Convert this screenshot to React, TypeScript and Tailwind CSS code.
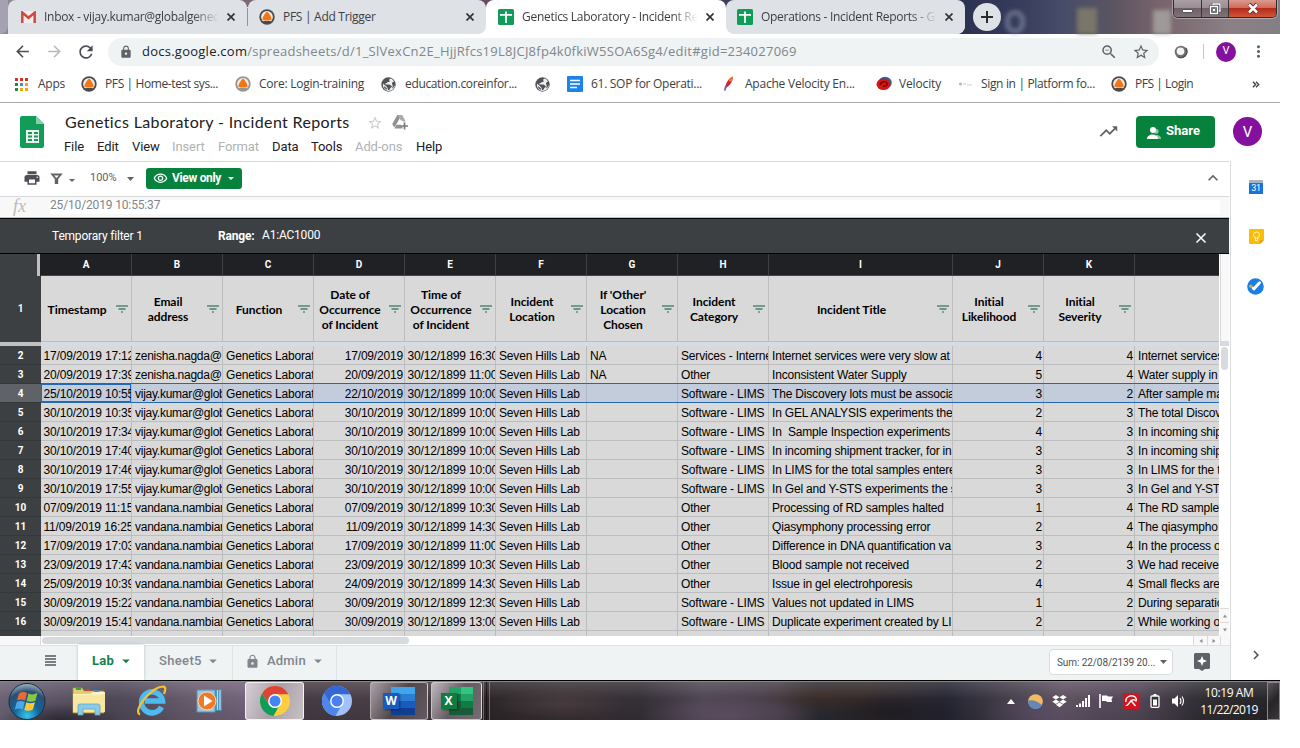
import type { ReactNode } from "react";
import { MdArrowBack, MdArrowForward, MdRefresh, MdLock, MdStarBorder, MdMoreVert, MdPrint, MdTrendingUp, MdKeyboardArrowUp, MdArrowDropDown, MdOutlineVisibility, MdOutlineZoomOut, MdKeyboardArrowRight } from "react-icons/md";
import { FaDropbox } from "react-icons/fa";

const COLS = "grid grid-cols-[91px_91px_91px_91px_91px_91px_91px_91px_184px_91px_91px_84px]";

function Pfs({ ring = "#4b4b4d" }: { ring?: string }) {
  return (
    <svg className="h-4 w-4 shrink-0" viewBox="0 0 16 16">
      <circle cx="8" cy="8" r="7.7" fill={ring} />
      <circle cx="8" cy="8" r="5.9" fill="#f6ece4" />
      <path d="M8 2.8c1.2 0 5 6 4.5 7.6-.6 1.5-8.4 1.500-9 0C3 8.800 6.800 2.800 8 2.800z" fill="#f37516" />
      <path d="M3.500 12h9L10.500 14h-5z" fill={ring} />
    </svg>
  );
}

function SheetsFav() {
  return (
    <svg className="h-4 w-4 shrink-0" viewBox="0 0 16 16">
      <rect width="16" height="16" rx="1.500" fill="#0f9d58" />
      <path d="M2 5.800h12M8 2.500v11.500" stroke="#fff" strokeWidth="1.800" fill="none" />
    </svg>
  );
}

function Globe() {
  return (
    <svg className="h-[15px] w-[15px] shrink-0" viewBox="0 0 15 15">
      <circle cx="7.500" cy="7.500" r="7.200" fill="#4f5256" />
      <path d="M9.800 1.500C8 2 7.800 3.200 8.500 3.800c.8.500-.2 1.400-1.300 1.300-1 0-1 1.200-2 1.200C4 6.300 3.600 7.300 5 7.500h3c1.300 0 1.200 1.200 2.400 1.300.8 0 .6 1.200-.4 1.700-1 .4-.8 1.700-1.800 2.600-1.400.3-1.400-.8-1.500-1.800C6.600 10 4.900 9.300 2 6.500c-.6 3 .8 6 4 7.200 4 1 7.500-1.500 7.800-5.200-1 .5-2-.5-2.500-1.500-.6-1 .3-2.300 1.700-2.300C12.500 3.200 11.300 2 9.800 1.500z" fill="#fff" opacity=".9" />
      <path d="M3 9c1.500 1.500 3 1.500 3.300 3.800C4 12.500 3 11 3 9zM11 6.500c.5-1 1.800-1 2.300 0s-.3 4-1.800 5c-.5-1.500 1-2.500-.5-5z" fill="#4f5256" />
    </svg>
  );
}

function Gmail() {
  return (
    <svg className="h-[12px] w-[15px] shrink-0" viewBox="0 0 15 12">
      <rect width="15" height="12" rx="1" fill="#f3eeee" />
      <path d="M1.300 12V1.600L7.500 6.800l6.200-5.200V12" fill="none" stroke="#d6453a" strokeWidth="2.500" />
    </svg>
  );
}

function Tab({ icon, title, width, active, fade, pad = "pl-3" }: { icon: ReactNode; title: string; width: string; active?: boolean; fade?: boolean; pad?: string }) {
  return (
    <div className={`flex h-full shrink-0 items-center gap-2 ${width} ${pad} pr-[12px] ${active ? "rounded-t-lg bg-white" : "bg-[#dee1e6]"}`}>
      {icon}
      <div className={`min-w-0 flex-1 overflow-hidden whitespace-nowrap text-[12px] tracking-[-0.29px] text-[#3c4043] ${fade ? "[mask-image:linear-gradient(to_right,#000_85%,transparent_100%)]" : ""}`}>{title}</div>
      <svg className="h-2 w-2 shrink-0" viewBox="0 0 8 8"><path d="M.5.500l7 7M7.500.500l-7 7" stroke="#303338" strokeWidth="1.700" /></svg>
    </div>
  );
}

function TabStrip() {
  return (
    <div className="flex h-[34px] w-[1280px] bg-[linear-gradient(90deg,#8d8795_0,#7d6872_19%,#51435a_30%,#694e5f_40%,#3a3d5c_57%,#2b3250_75%,#35395a_79%,#474c69_83%,#5c5561_87%,#7b656d_91%,#8a8085_96%,#837f86_100%)]">
      <div className="flex h-full w-[965px] shrink-0 overflow-hidden rounded-br-lg">
        <div className="w-2 shrink-0 rounded-br-lg bg-[#a5a1b0]" />
        <div className="flex h-full w-[478px] shrink-0 items-center bg-[linear-gradient(transparent_40%,#fff_40%)]">
          <Tab width="w-[239px]" icon={<Gmail />} title="Inbox - vijay.kumar@globalgenec" fade pad="pl-[13px] rounded-t-lg" />
          <div className="flex h-full w-px shrink-0 items-center bg-[linear-gradient(transparent_20%,#dee1e6_20%)]"><div className="h-[18px] w-px bg-[#909399]" /></div>
          <Tab width="w-[238px]" icon={<Pfs />} title="PFS | Add Trigger" pad="pl-[11px] rounded-t-lg rounded-br-lg" />
        </div>
        <Tab width="w-[240px]" active icon={<SheetsFav />} title="Genetics Laboratory - Incident Re" fade />
        <div className="h-full bg-[linear-gradient(transparent_40%,#fff_40%)]">
          <Tab width="w-[239px]" icon={<SheetsFav />} title="Operations - Incident Reports - G" fade pad="pl-[11px] rounded-t-lg rounded-b-lg" />
        </div>
      </div>
      <div className="ml-2 mt-[3px] flex h-7 w-7 shrink-0 items-center justify-center rounded-full bg-[#dee1e6]">
        <svg className="h-3 w-3" viewBox="0 0 12 12"><path d="M6 0v12M0 6h12" stroke="#2a2c30" strokeWidth="2" /></svg>
      </div>
      <div className="flex h-full min-w-0 flex-1 items-end gap-[52px] pl-1 blur-[2px]">
        <div className="h-[24px] w-[20px] rounded-full border-[5px] border-[#8895a8] opacity-60" />
        <div className="h-[26px] w-[20px] bg-[#85806a] opacity-80" />
        <div className="ml-1 h-[24px] w-[18px] bg-[#a8a8a4] opacity-80" />
      </div>
      <div className="mr-[3px] flex h-[18px] w-[104px] shrink-0 overflow-hidden rounded-b-[5px] border border-t-0 border-[#33282c] shadow-[0_0_0_1px_rgba(255,255,255,0.35)]">
        <div className="flex w-[28px] items-center justify-center border-r border-[#3c3236] bg-[linear-gradient(#aaa0a6,#9a8d93_45%,#6d6067_50%,#807279)]">
          <div className="mt-1 h-[4px] w-[11px] rounded-[1px] border border-[#555] bg-white" />
        </div>
        <div className="flex w-[27px] items-center justify-center border-r border-[#3c3236] bg-[linear-gradient(#aaa0a6,#9a8d93_45%,#6d6067_50%,#807279)]">
          <svg className="h-3 w-3" viewBox="0 0 12 12" fill="none">
            <path d="M4 1h7v7H4z" stroke="#444" strokeWidth="2.600" /><path d="M4 1h7v7H4z" stroke="#fff" strokeWidth="1.300" />
            <path d="M1.500 3.500h7v7h-7z" fill="#777" stroke="#444" strokeWidth="2.600" /><path d="M1.500 3.500h7v7h-7z" stroke="#fff" strokeWidth="1.400" /><path d="M4 6h2v2H4z" fill="#fff" />
          </svg>
        </div>
        <div className="flex flex-1 items-center justify-center bg-[linear-gradient(#dc9a8e,#cf6c5c_45%,#b52c18_50%,#d0553a)]">
          <svg className="h-[11px] w-3" viewBox="0 0 12 11"><path d="M2 1l8 9M10 1L2 10" stroke="#5a2a25" strokeWidth="4" /><path d="M2 1.500l8 8M10 1.500l-8 8" stroke="#fff" strokeWidth="2.500" /></svg>
        </div>
      </div>
    </div>
  );
}

function Toolbar() {
  return (
    <div className="flex h-[35px] w-[1280px] items-center bg-white text-[#5f6368]">
      <MdArrowBack className="ml-[13px] h-[19px] w-[19px] text-[#4a4d51]" />
      <MdArrowForward className="ml-[13px] h-[19px] w-[19px] text-[#b9bbbe]" />
      <MdRefresh className="ml-3 h-5 w-5 text-[#4a4d51]" />
      <div className="ml-3 flex h-7 w-[1051px] items-center rounded-full bg-[#eff3f4]">
        <MdLock className="ml-[11px] h-[14px] w-[14px]" />
        <div className="ml-[9px] flex-1 whitespace-nowrap pt-px text-[13px] tracking-[0.25px] text-[#80868b]">
          <span className="text-[#202124]">docs.google.com</span>/spreadsheets/d/1_SlVexCn2E_HjjRfcs19L8JCJ8fp4k0fkiW5SOA6Sg4/edit#gid=234027069
        </div>
        <MdOutlineZoomOut className="h-[18px] w-[18px]" />
        <MdStarBorder className="ml-[14px] mr-[9px] h-[18px] w-[18px]" />
      </div>
      <svg className="ml-[15px] h-[14px] w-[14px]" viewBox="0 0 14 14"><circle cx="7" cy="7" r="6.300" fill="#707276" /><circle cx="6.500" cy="6.300" r="3.800" fill="#f3f3f3" /><path d="M12 3a6.300 6.300 0 0 1-8 9" stroke="#4b4d50" strokeWidth="1.300" fill="none" /></svg>
      <div className="ml-[15px] h-[15px] w-px bg-[#c4c7ca]" />
      <div className="ml-3 flex h-5 w-5 items-center justify-center rounded-full bg-[#84109d] font-[Roboto] text-[11px] text-white">V</div>
      <MdMoreVert className="ml-[13px] h-[19px] w-[19px]" />
    </div>
  );
}

function Mark({ icon, label, w, tr = "tracking-[-0.3px]" }: { icon: ReactNode; label: string; w: string; tr?: string }) {
  return (
    <div className={`flex shrink-0 items-center ${w}`}>
      <div className="flex w-6 shrink-0 items-center">{icon}</div>
      <span className={`whitespace-nowrap ${tr}`}>{label}</span>
    </div>
  );
}

function AppsIcon() {
  const c = ["#d93025", "#d93025", "#d93025", "#1e8e3e", "#4285f4", "#f2a60c", "#1e8e3e", "#f2a60c", "#f2a60c"];
  return <svg className="h-[13px] w-[13px]" viewBox="0 0 13 13">{c.map((f, i) => <rect key={i} x={(i % 3) * 5} y={Math.floor(i / 3) * 5} width="3" height="3" fill={f} />)}</svg>;
}

function Bookmarks() {
  return (
    <div className="flex h-[33px] w-[1280px] items-center bg-white pb-[3px] pl-[15px] text-[12px] text-[#3c4043]">
      <Mark w="w-[66px]" tr="tracking-[-0.25px] -ml-px" icon={<AppsIcon />} label="Apps" />
      <Mark w="w-[154px]" tr="tracking-[-0.39px]" icon={<Pfs />} label="PFS | Home-test sys..." />
      <Mark w="w-[146px]" tr="tracking-[-0.25px]" icon={<Pfs ring="#949494" />} label="Core: Login-training" />
      <Mark w="w-[154px]" tr="tracking-[-0.35px]" icon={<Globe />} label="education.coreinfor..." />
      <Mark w="w-[32px]" icon={<Globe />} label="" />
      <Mark
        w="w-[154px]"
        tr="tracking-[-0.29px]"
        icon={<svg className="h-4 w-4" viewBox="0 0 16 16"><rect width="16" height="16" rx="1" fill="#1a84ea" /><path d="M3 4.500h10M3 8h10M3 11.500h7" stroke="#fff" strokeWidth="1.600" /></svg>}
        label="61. SOP for Operati..."
      />
      <Mark
        w="w-[155px]"
        tr="tracking-[-0.22px]"
        icon={<svg className="h-4 w-4" viewBox="0 0 16 16"><path d="M4 15.500C3.500 10 6 3 11.500.500c1 3-2 9-6 11z" fill="#d01f3c" /><path d="M7.500 5C8.500 3 10 1.300 11.500.500c.5 1.500 0 3.500-.800 5.300z" fill="#ee7b22" /><path d="M3 15.500c0-3 .5-5 1.700-6l1.500 1z" fill="#8d5aa0" /></svg>}
        label="Apache Velocity En..."
      />
      <Mark
        w="w-[82px]"
        tr="tracking-[-0.15px] -ml-px"
        icon={<svg className="h-4 w-4" viewBox="0 0 16 16"><ellipse cx="9" cy="6.800" rx="6.800" ry="6" fill="#33619c" /><ellipse cx="7.500" cy="8.300" rx="7" ry="5.800" fill="#d9150f" /><path d="M4 9c1-4 6-4 7-2s-2 4-4 3" fill="none" stroke="#6d0806" strokeWidth="1.400" /></svg>}
        label="Velocity"
      />
      <Mark
        w="w-[153px]"
        tr="tracking-[-0.34px] -ml-px"
        icon={<svg className="h-4 w-4" viewBox="0 0 16 16"><circle cx="2.500" cy="8" r="1.600" fill="#c9b3ab" /><path d="M5 8h3M9 9h5" stroke="#cfcfcf" strokeWidth="1.200" /></svg>}
        label="Sign in | Platform fo..."
      />
      <Mark w="w-[141px]" tr="tracking-[-0.45px]" icon={<Pfs />} label="PFS | Login" />
      <svg className="h-[7px] w-[8px]" viewBox="0 0 10 9"><path d="M1 1l3.500 3.500L1 8M5 1l3.500 3.500L5 8" fill="none" stroke="#3c4043" strokeWidth="1.700" /></svg>
    </div>
  );
}

function DocsHeader() {
  return (
    <div className="flex h-[59px] w-[1280px] border-t border-[#a9acaf] bg-white font-[Roboto]">
      <svg className="ml-5 mt-[13px] h-8 w-6 shrink-0" viewBox="0 0 24 32">
        <path d="M2 0h14l8 8v22a2 2 0 0 1-2 2H2a2 2 0 0 1-2-2V2a2 2 0 0 1 2-2z" fill="#0f9d58" />
        <path d="M16 0l8 8h-8z" fill="#87ceac" />
        <path d="M6 14h13v13H6z" fill="#f1f1f1" />
        <path d="M8 17h4M14 17h4M8 20.500h4M14 20.500h4M8 24h4M14 24h4" stroke="#0f9d58" strokeWidth="1.800" />
      </svg>
      <div className="ml-[20px] w-[1001px] pt-2">
        <div className="flex h-[23px] items-center">
          <span className="whitespace-nowrap pb-px pl-px font-[Lato] text-[16px] tracking-[0.35px] text-[#202124]">Genetics Laboratory - Incident Reports</span>
          <MdStarBorder className="ml-[17px] mt-px h-4 w-4 text-[#c9cbcd]" />
          <svg className="ml-[9px] h-[15px] w-4" viewBox="0 0 16 15"><path d="M5.300 0h4.300L5 8.200l-2.600 4.300L.200 9z" fill="#8f9295" /><path d="M5.800 0h4.400l3.600 6.500h-2.500L8.500 5z" fill="#a9abad" /><path d="M4.500 9.800H9v2h1.500v1.700H2.500z" fill="#8f9295" /><path d="M12.500 7.500v7M9 11h7" stroke="#77797c" strokeWidth="1.700" /></svg>
        </div>
        <div className="flex h-6 items-center pt-px text-[13px] tracking-[-0.1px] text-[#202124]">
          <span className="w-[33px]">File</span>
          <span className="w-[35px]">Edit</span>
          <span className="w-[40px]">View</span>
          <span className="w-[46px] text-[#b0b2b4]">Insert</span>
          <span className="w-[54px] text-[#b0b2b4]">Format</span>
          <span className="w-[39px]">Data</span>
          <span className="w-[44px]">Tools</span>
          <span className="w-[61px] text-[#b0b2b4]">Add-ons</span>
          <span>Help</span>
        </div>
      </div>
      <MdTrendingUp className="ml-[33px] mt-[18px] h-[21px] w-[21px] shrink-0 text-[#5f6368]" />
      <div className="ml-[17px] mt-[13px] flex h-8 w-[79px] shrink-0 items-center rounded bg-[#07823d] pb-[2px] pl-[11px] text-[13px] font-bold text-white">
        <svg className="mr-[5px] mt-1 h-3 w-[14px]" viewBox="0 0 14 12"><circle cx="9.300" cy="4.500" r="2.400" fill="#fff" opacity=".55" /><path d="M8 12h6c0-3-2-4-5-4z" fill="#fff" opacity=".55" /><circle cx="6" cy="3" r="3" fill="#fff" /><path d="M0 12c0-6 11-6 11 0z" fill="#fff" /></svg>Share
      </div>
      <div className="ml-[18px] mt-[14px] flex h-[29px] w-[29px] shrink-0 items-center justify-center rounded-full bg-[#84109d] pt-px text-[15px] text-white">V</div>
    </div>
  );
}

function SheetToolbar() {
  return (
    <div className="flex h-[35px] w-[1229px] shrink-0 items-center border-t border-[#d6d8da] bg-white pb-[2px] font-[Roboto] text-[#5f6368]">
      <MdPrint className="ml-[23px] h-[18px] w-[18px] text-[#4c4f53]" />
      <svg className="ml-[9px] h-[11px] w-[13px]" viewBox="0 0 13 11"><path d="M.3.500h12.400L8.200 6v5H4.800V6z" fill="#5f6368" /><path d="M4 2.500h5L6.500 5z" fill="#fff" /></svg>
      <svg className="ml-[6px] mt-[5px] h-[3px] w-[6px]" viewBox="0 0 6 3"><path d="M0 0h6L3 3z" fill="#5f6368" /></svg>
      <span className="ml-[15px] w-[37px] text-[11px] tracking-[-0.05px]">100%</span>
      <svg className="mt-px h-[4px] w-[7px]" viewBox="0 0 7 4"><path d="M0 0h7L3.500 4z" fill="#5f6368" /></svg>
      <div className="ml-[12px] flex h-[21px] w-[96px] items-center rounded-[3px] bg-[#07823d] pl-[7px] text-[12px] font-bold tracking-[-0.33px] text-white">
        <MdOutlineVisibility className="mr-[4px] h-[15px] w-[15px]" />View only
        <svg className="ml-[7px] mt-px h-[3px] w-[6px]" viewBox="0 0 6 3"><path d="M0 0h6L3 3z" fill="#fff" /></svg>
      </div>
      <MdKeyboardArrowUp className="ml-auto mr-[6px] h-5 w-5" />
    </div>
  );
}

const headers = ["Timestamp", "Email\naddress", "Function", "Date of\nOccurrence\nof Incident", "Time of\nOccurrence\nof Incident", "Incident\nLocation", "If 'Other'\nLocation\nChosen", "Incident\nCategory", "Incident Title", "Initial\nLikelihood", "Initial\nSeverity", ""];
const Z = "zenisha.nagda@";
const V = "vijay.kumar@glob";
const N = "vandana.nambiar";
const SL = "Software - LIMS";
type Row = [string, string, string, string, string, string, string, number, number, string];
const rows: Row[] = [
  ["17/09/2019 17:12", Z, "17/09/2019", "16:30", "NA", "Services - Interne", "Internet services were very slow at", 4, 4, "Internet services"],
  ["20/09/2019 17:39", Z, "20/09/2019", "11:00", "NA", "Other", "Inconsistent Water Supply", 5, 4, "Water supply in"],
  ["25/10/2019 10:55", V, "22/10/2019", "10:00", "", SL, "The Discovery lots must be associa", 3, 2, "After sample ma"],
  ["30/10/2019 10:35", V, "30/10/2019", "10:00", "", SL, "In GEL ANALYSIS experiments the", 2, 3, "The total Discov"],
  ["30/10/2019 17:34", V, "30/10/2019", "10:00", "", SL, "In  Sample Inspection experiments", 4, 3, "In incoming ship"],
  ["30/10/2019 17:40", V, "30/10/2019", "10:00", "", SL, "In incoming shipment tracker, for in", 3, 3, "In incoming ship"],
  ["30/10/2019 17:46", V, "30/10/2019", "10:00", "", SL, "In LIMS for the total samples entere", 3, 3, "In LIMS for the t"],
  ["30/10/2019 17:55", V, "30/10/2019", "10:00", "", SL, "In Gel and Y-STS experiments the s", 3, 3, "In Gel and Y-ST"],
  ["07/09/2019 11:15", N, "07/09/2019", "10:30", "", "Other", "Processing of RD samples halted", 1, 4, "The RD sample"],
  ["11/09/2019 16:25", N, "11/09/2019", "14:30", "", "Other", "Qiasymphony processing error", 2, 4, "The qiasympho"],
  ["17/09/2019 17:03", N, "17/09/2019", "11:00", "", "Other", "Difference in DNA quantification va", 3, 4, "In the process o"],
  ["23/09/2019 17:43", N, "23/09/2019", "10:30", "", "Other", "Blood sample not received", 2, 3, "We had receive"],
  ["25/09/2019 10:39", N, "24/09/2019", "14:30", "", "Other", "Issue in gel electrohporesis", 4, 4, "Small flecks are"],
  ["30/09/2019 15:22", N, "30/09/2019", "12:30", "", SL, "Values not updated in LIMS", 1, 2, "During separatio"],
  ["30/09/2019 15:41", N, "30/09/2019", "13:00", "", SL, "Duplicate experiment created by LI", 2, 2, "While working o"],
];

function Grid() {
  return (
    <div className="flex h-[382px] w-[1219px] shrink-0 flex-col overflow-hidden">
      <div className="flex h-[22px] shrink-0">
        <div className="w-[41px] shrink-0 border-r border-[#202124] bg-[#3c4043]"><div className="ml-auto h-full w-[3px] bg-[#c0c0c0]" /></div>
        <div className={`${COLS} flex-1 border-b border-[#1c5c38] bg-[#202124] font-[Roboto] text-[10px] font-bold text-white`}>
          {["A", "B", "C", "D", "E", "F", "G", "H", "I", "J", "K", ""].map((c, i) => (
            <div key={i} className={`flex items-center justify-center ${i < 11 ? "border-r border-[#3f4245]" : ""}`}>{c}</div>
          ))}
        </div>
      </div>
      <div className="flex h-[66px] shrink-0">
        <div className="flex w-[41px] shrink-0 items-center justify-center bg-[#3c4043] pb-px font-[Roboto] text-[10px] font-bold text-white">1</div>
        <div className={`${COLS} border-b border-[#bcbdbf] bg-[#d9d9d9] font-[Lato] text-[12px] font-bold leading-[15px] tracking-[-0.06px] text-black`}>
          {headers.map((h, i) => (
            <div key={i} className={`flex items-center pt-px ${i < 11 ? "border-r border-[#bcbdbf]" : ""}`}>
              <div className="flex-1 whitespace-pre pr-[3px] text-center">{h}</div>
              {h && <svg className="mr-[3px] h-[8px] w-[12px] shrink-0" viewBox="0 0 12 8"><path d="M0 1h12" stroke="#3d7a61" strokeWidth="1.300" /><path d="M2.500 4h7" stroke="#2f7054" strokeWidth="1.300" /><path d="M5 7h2" stroke="#5b8f79" strokeWidth="1.300" /></svg>}
            </div>
          ))}
        </div>
      </div>
      <div className="flex h-1 shrink-0">
        <div className="w-[41px] bg-[#c0c0c0]" />
        <div className="flex-1 bg-[#d6dce6]" />
      </div>
      {rows.map((r, i) => {
        const sel = i === 2;
        const cells: [string | number, boolean][] = [[r[0], false], [r[1], false], ["Genetics Laborat", false], [r[2], true], ["30/12/1899 " + r[3], false], ["Seven Hills Lab", false], [r[4], false], [r[5], false], [r[6], false], [r[7], true], [r[8], true], [r[9], false]];
        return (
          <div key={i} className="flex h-[19px] shrink-0">
            <div className={`flex w-[41px] shrink-0 items-center justify-center border-b border-[#35383b] font-[Roboto] text-[10px] font-bold text-white ${sel ? "bg-[#5f6368]" : "bg-[#3c4043]"}`}>{i + 2}</div>
            <div className={`${COLS} whitespace-pre border-b font-['Liberation_Sans'] text-[12px] leading-[20px] tracking-[-0.18px] text-black ${sel ? "border-[#2268b5] bg-[#c3ccdb]" : i === 1 ? "border-[#2268b5] bg-[#d9d9d9]" : "border-[#bcbdbf] bg-[#d9d9d9]"}`}>
              {cells.map(([t, right], j) => (
                <div key={j} className={`overflow-hidden ${j === 11 ? "" : sel ? "border-r border-[#aeb6c4]" : "border-r border-[#bcbdbf]"} ${right ? "pr-px text-right" : j === 0 || j === 4 ? "pl-[2.5px]" : "pl-[3px]"} ${j === 1 ? "tracking-[-0.26px]" : ""} ${sel && j === 0 ? "shadow-[inset_0_0_0_1px_#2268b5]" : ""}`}>{t}</div>
              ))}
            </div>
          </div>
        );
      })}
      <div className="flex h-[5px] shrink-0">
        <div className="w-[41px] shrink-0 bg-[#3c4043]" />
        <div className={`${COLS} bg-[#d9d9d9]`}>{headers.map((_, i) => <div key={i} className={i < 11 ? "border-r border-[#bcbdbf]" : ""} />)}</div>
      </div>
    </div>
  );
}

function Arrow({ d }: { d: string }) {
  return <svg className="h-[6px] w-[6px]" viewBox="0 0 6 6"><path d={d} fill="#8b8e92" /></svg>;
}

function Sheet() {
  return (
    <div className="flex w-[1231px] shrink-0 flex-col border-r border-[#d9dbdd]">
      <SheetToolbar />
      <div className="flex h-[22px] w-[1229px] shrink-0 border-b border-t border-b-[#bfc1c3] border-t-[#d6d8da] bg-[#f8f8f8]">
        <div className="w-[50px] pl-[13px] pt-px font-['Liberation_Serif'] text-[18px] italic leading-[16px] text-[#b9bbbd]">fx</div>
        <div className="mt-[3px] h-[14px] w-[1170px] bg-white font-[Roboto] text-[12px] leading-[10px] tracking-[-0.15px] text-[#80868b]">25/10/2019 10:55:37</div>
      </div>
      <div className="flex h-[36px] w-[1229px] shrink-0 items-center border-y border-black bg-[#3c4043] font-[Roboto] text-[12px] tracking-[-0.2px] text-white">
        <span className="w-[166px] whitespace-nowrap pl-[52px]">Temporary filter 1</span>
        <span className="ml-[52px] w-[44px] font-bold">Range:</span>
        <span className="mb-[2px]">A1:AC1000</span>
        <svg className="ml-auto mr-[23px] mt-[3px] h-[10px] w-[10px]" viewBox="0 0 10 10"><path d="M.5.500l9 9M9.500.500l-9 9" stroke="#fff" strokeWidth="1.500" /></svg>
      </div>
      <div className="flex h-[382px] shrink-0">
        <Grid />
        <div className="flex w-[10px] flex-col bg-white">
          <div className="ml-px h-[87px] border-l border-[#d9d9d9] bg-[#f8f8f8]" />
          <div className="ml-px h-[5px] bg-[#d6dae0]" />
          <div className="ml-[2px] mt-px h-[23px] w-[7px] rounded-full bg-[#d8dbde]" />
          <div className="ml-px mt-auto flex h-[28px] flex-col border-t border-[#dcdcdc] bg-[#f8f8f8]">
            <div className="flex flex-1 items-center justify-center border-b border-[#dcdcdc]"><Arrow d="M1 4.500h4L3 1.500z" /></div>
            <div className="flex flex-1 items-center justify-center"><Arrow d="M1 1.500h4L3 4.500z" /></div>
          </div>
        </div>
      </div>
      <div className="flex h-[9px] shrink-0 bg-white">
        <div className="w-[41px] border-r border-[#d9d9d9] bg-[#f8f8f8]" />
        <div className="ml-px mt-px h-[7px] w-[367px] rounded-full bg-[#d8dbde]" />
        <div className="ml-auto flex w-[14px] items-center justify-center border-l border-[#dcdcdc] bg-[#f8f8f8]"><Arrow d="M4.500 1v4L1.500 3z" /></div>
        <div className="flex w-[14px] items-center justify-center border-x border-[#dcdcdc] bg-[#f8f8f8]"><Arrow d="M1.500 1v4L4.500 3z" /></div>
        <div className="w-[9px] bg-[#f8f8f8]" />
      </div>
      <div className="flex h-[35px] shrink-0 border-t border-[#dfe2e3] bg-[#eff3f4] font-[Roboto] text-[13px] font-medium text-[#80868b]">
        <div className="flex w-[78px] items-center pb-[5px] pl-[45px]"><svg className="h-[11px] w-[11px]" viewBox="0 0 11 11"><path d="M0 1h11M0 4h11M0 7h11M0 10h11" stroke="#55585c" strokeWidth="1.700" /></svg></div>
        <div className="-mt-px flex w-[66px] items-center bg-white pb-[3px] pl-[14px] font-bold tracking-[0.2px] text-[#188048] shadow-[0_0_3px_rgba(60,64,67,0.3)]">Lab<MdArrowDropDown className="ml-[3px] h-[18px] w-[18px]" /></div>
        <div className="flex w-[89px] items-center border-r border-[#e0e4e6] pb-[4px] pl-[15px] tracking-[0.35px]">Sheet5<MdArrowDropDown className="ml-[2px] h-[18px] w-[18px]" /></div>
        <div className="flex w-[104px] items-center border-r border-[#e0e4e6] pb-[4px] pl-[12px] tracking-[0.2px]"><MdLock className="mr-[7px] h-[15px] w-[15px] shrink-0" />Admin<MdArrowDropDown className="ml-[3px] h-[18px] w-[18px] shrink-0" /></div>
        <div className="ml-auto mt-[3px] flex h-[26px] w-[124px] items-center rounded border border-[#dadce0] bg-white pl-[7px] text-[10px] font-normal tracking-[-0.08px] text-[#4b4f53]">
          <span className="w-[103px] whitespace-nowrap">Sum: 22/08/2139 20...</span>
          <svg className="h-[4px] w-[7px]" viewBox="0 0 7 4"><path d="M0 0h7L3.500 4z" fill="#5f6368" /></svg>
        </div>
        <svg className="ml-[21px] mr-[20px] mt-[7px] h-[18px] w-4" viewBox="0 0 16 18"><path d="M1.500 0h13A1.500 1.500 0 0 1 16 1.500v13a1.500 1.500 0 0 1-1.500 1.500H11l-3 2-3-2H1.500A1.500 1.500 0 0 1 0 14.500v-13A1.500 1.500 0 0 1 1.500 0z" fill="#5f6368" /><path d="M8 3l1.400 3.600L13 8l-3.600 1.400L8 13 6.600 9.400 3 8l3.600-1.400z" fill="#fff" /></svg>
      </div>
    </div>
  );
}

function SidePanel() {
  return (
    <div className="flex w-[49px] flex-col items-center bg-white">
      <div className="ml-px mt-[19px] flex h-[14px] w-[14px] items-center justify-center border-t-[3px] border-[#a7b4bf] bg-[#1a73d8] font-[Roboto] text-[9px] leading-none tracking-tight text-white">31</div>
      <svg className="ml-px mt-[35px] h-[15px] w-[15px]" viewBox="0 0 15 15"><path d="M1 0h13a1 1 0 0 1 1 1v10l-4 4H1a1 1 0 0 1-1-1V1a1 1 0 0 1 1-1z" fill="#fbbc04" /><path d="M15 11h-4v4z" fill="#e79f0a" /><circle cx="7.500" cy="6" r="3" fill="none" stroke="#fff" strokeWidth="1" opacity=".8" /><path d="M6.300 9v2.500h2.400V9" fill="none" stroke="#fff" strokeWidth="1" opacity=".8" /></svg>
      <svg className="mt-[34px] h-[17px] w-[17px]" viewBox="0 0 17 17"><circle cx="8.500" cy="8.500" r="8.300" fill="#1a7fe6" /><path d="M7 10.800l5.500-6" stroke="#fff" strokeWidth="3" strokeLinecap="round" /><path d="M6 10l1 1" stroke="#fff" strokeWidth="2.500" strokeLinecap="round" /><circle cx="3.800" cy="8.300" r="1.800" fill="#c9ae4a" /></svg>
      <MdKeyboardArrowRight className="mb-[16px] mt-auto h-[18px] w-[18px] text-[#4c4f53]" />
    </div>
  );
}

function ChromeLogo({ a, b, c, d }: { a: string; b: string; c: string; d: string }) {
  return (
    <svg className="h-[30px] w-[30px]" viewBox="0 0 30 30">
      <circle cx="15" cy="15" r="15" fill={c} />
      <path d="M2 7.500A15 15 0 0 1 28 7.500L28 8.200H15L9 18.500z" fill={a} />
      <path d="M2 7.500L9 18.500a7 7 0 0 0 9.500 2.500L13.500 30A15 15 0 0 1 2 7.500z" fill={b} />
      <circle cx="15" cy="15" r="6.900" fill="#fff" />
      <circle cx="15" cy="15" r="5.500" fill={d} />
    </svg>
  );
}

function Office({ letter, tones, split, tile }: { letter: string; tones: [string, string, string, string]; split: boolean; tile: string }) {
  return (
    <div className="relative h-7 w-8">
      <svg className="h-7 w-8" viewBox="0 0 32 28">
        <rect x="8" width="24" height="7" fill={tones[0]} /><rect x="8" y="7" width="24" height="7" fill={tones[1]} /><rect x="8" y="14" width="24" height="7" fill={tones[2]} /><rect x="8" y="21" width="24" height="7" fill={tones[3]} />
        {split && <><rect x="8" width="12" height="7" fill="#21a366" /><rect x="8" y="7" width="12" height="7" fill="#107c41" /><rect x="8" y="14" width="12" height="7" fill="#185c37" /></>}
      </svg>
      <div className={`absolute left-0 top-[6px] flex h-4 w-4 items-center justify-center font-['Open_Sans'] text-[12px] font-bold text-white shadow-[1px_1px_2px_rgba(0,0,0,0.4)] ${tile}`}>{letter}</div>
    </div>
  );
}

function Taskbar() {
  return (
    <div className="h-[40px] w-[1280px] border-t border-black bg-[linear-gradient(90deg,#6b6275_0,#4e4757_9%,#685c6d_15%,#71627a_19%,#453b44_24%,#4b3f47_32%,#2c2629_38%,#3a3134_44%,#352f37_50%,#504654_55%,#463d49_61%,#2a2a33_64%,#342a2b_68%,#252632_74%,#3f3a46_78%,#5e5161_83%,#524757_89%,#302d33_94%,#252427_100%)]">
      <div className="flex h-[39px] w-full items-center border-t border-[#8a858b] bg-[linear-gradient(180deg,rgba(255,255,255,0.14),transparent_45%,rgba(0,0,0,0.1)),radial-gradient(60px_20px_at_820px_14px,rgba(70,45,30,0.55),transparent),radial-gradient(90px_20px_at_730px_34px,rgba(115,97,120,0.55),transparent),radial-gradient(70px_14px_at_560px_22px,rgba(85,70,72,0.5),transparent),radial-gradient(70px_20px_at_890px_30px,rgba(22,22,32,0.6),transparent),radial-gradient(60px_24px_at_1040px_34px,rgba(105,90,120,0.5),transparent),radial-gradient(60px_18px_at_60px_38px,rgba(20,18,24,0.6),transparent)] text-white">
        <svg className="ml-2 h-[37px] w-[38px] shrink-0" viewBox="0 0 38 37">
          <defs>
            <radialGradient id="orb" cx="50%" cy="90%" r="90%"><stop offset="0" stopColor="#37c6ee" /><stop offset=".4" stopColor="#15629a" /><stop offset=".75" stopColor="#2b5074" /><stop offset="1" stopColor="#a2b9c6" /></radialGradient>
          </defs>
          <circle cx="19" cy="18.500" r="18" fill="url(#orb)" stroke="#1c2d3a" />
          <path d="M11 10.500q4-2.500 8-.5l-2 7.500q-4-2-8 0z" fill="#f0692c" />
          <path d="M20.500 10.500q4 2 9-.5l-2.200 7.700q-4.500 2-8.600 0z" fill="#8cc63e" />
          <path d="M8.700 19q4-2 8 0l-2 7.500q-4-2-8 .2z" fill="#4ea7e5" />
          <path d="M18.300 19.300q4 2 8.700 0L24.800 26.500q-4.300 2.300-8.500.5z" fill="#fdc935" />
        </svg>
        <svg className="ml-[26px] h-[30px] w-[34px] shrink-0" viewBox="0 0 34 30">
          <path d="M1 2h9l2 3h20v22H1z" fill="#e7cd70" stroke="#b59a46" strokeWidth=".7" />
          <path d="M4 1h5v3H4z" fill="#3d9e44" /><path d="M13 3h5v2h-5z" fill="#c84438" /><path d="M22 4h5v2h-5z" fill="#4a88c8" />
          <path d="M1 8h18l2-2h12v20H1z" fill="#f8e7a0" /><path d="M1 8h18l2-2h12v2l-12 1H1z" fill="#fff3c4" />
          <path d="M6 29V20q0-2 2-2h18q2 0 2 2v9h-5v-6H11v6z" fill="#8ccbe8" stroke="#5da3c9" strokeWidth=".8" />
        </svg>
        <svg className="ml-[30px] h-[32px] w-[32px] shrink-0" viewBox="0 0 32 32">
          <path d="M25.500 22A10.500 10.500 0 1 1 26.500 16H9" fill="none" stroke="#4fbaf0" strokeWidth="5.500" />
          <path d="M4 29.500C-4 26 15 2 27 1.500c4 0 1.500 6 1 7.500" fill="none" stroke="#f5c32c" strokeWidth="2.200" />
        </svg>
        <svg className="ml-[28px] h-[26px] w-[28px] shrink-0" viewBox="0 0 28 26">
          <path d="M6 1h20v22H6z" fill="#3f8bb5" /><path d="M24 2v20M21.500 2v20" stroke="#b5dff2" strokeWidth="1.300" />
          <path d="M1 2h18v22H1z" fill="#9cc7dd" stroke="#5a94b4" />
          <circle cx="11" cy="13" r="9" fill="#ee7a24" stroke="#fbd7bb" /><path d="M8 7.500l8.500 5.500L8 18.500z" fill="#fff" />
        </svg>
        <div className="ml-[21px] flex h-[38px] w-[59px] shrink-0 items-center justify-center rounded-[3px] border border-white/80 bg-[linear-gradient(110deg,#d5cfd5,#aaa0a8_50%,#c6c0c3)]"><ChromeLogo a="#db4437" b="#0f9d58" c="#ffcd40" d="#4285f4" /></div>
        <div className="ml-[18px] w-[30px] shrink-0"><ChromeLogo a="#3367d6" b="#4f86ec" c="#a0c1fa" d="#4a7ff0" /></div>
        <div className="ml-[18px] flex h-[38px] w-[58px] shrink-0 items-center justify-center rounded-[3px] border border-white/50 bg-[linear-gradient(120deg,#aaa2a8,#50474d_50%,#625a60)]"><Office letter="W" split={false} tile="bg-[#185abd]" tones={["#41a5ee", "#2b7cd3", "#185abd", "#103f91"]} /></div>
        <div className="ml-[3px] flex h-[38px] w-[51px] shrink-0 items-center justify-center rounded-[3px] border border-white/60 bg-[linear-gradient(120deg,#c0b9bf,#655b62_50%,#766d73)]"><Office letter="X" split tile="bg-[#107c41]" tones={["#33c481", "#21a366", "#107c41", "#185c37"]} /></div>
        <div className="ml-px flex h-[38px] w-[7px] shrink-0 border-x border-white/30"><div className="ml-[2px] w-px bg-black/50" /></div>
        <svg className="ml-auto h-[5px] w-2 shrink-0" viewBox="0 0 8 5"><path d="M0 5h8L4 0z" fill="#fff" /></svg>
        <svg className="ml-[13px] h-[15px] w-[15px] shrink-0" viewBox="0 0 15 15"><circle cx="7.500" cy="7.500" r="7.300" fill="#f3bb61" /><path d="M.300 6.500Q7 5 14 11a7.300 7.300 0 0 1-13.700-4.500z" fill="#6387b8" /></svg>
        <FaDropbox className="ml-[9px] h-[14px] w-[15px] shrink-0" />
        <svg className="ml-[8px] h-[12px] w-[16px] shrink-0" viewBox="0 0 16 12"><path d="M1 10h2v2H1zM4 8.500h2V12H4zM7 6h2v6H7zM10 3h2v9h-2zM13 0h2v12h-2z" fill="#fff" /></svg>
        <svg className="ml-[8px] h-[14px] w-[15px] shrink-0" viewBox="0 0 15 14"><path d="M1 0v14" stroke="#fff" strokeWidth="1.600" /><path d="M3 1.500h5l1 1h5l-1.500 3L13 8H8L7 7H3z" fill="#fff" /></svg>
        <div className="ml-[9px] flex h-4 w-4 shrink-0 items-center justify-center bg-[#d5121d]">
          <svg className="h-3 w-3" viewBox="0 0 12 12"><path d="M1 7C0 2 6-1 10 2c2 2 1 4 1 4Q8 3.500 5.500 6.500L3 9.500q-1.500 1.500-2 .5M5.500 5l5 6" fill="none" stroke="#fff" strokeWidth="1.400" /></svg>
        </div>
        <svg className="ml-[11px] h-[14px] w-[10px] shrink-0" viewBox="0 0 10 14"><path d="M3.500 0h3v2h-3z" fill="#fff" /><rect x="1" y="2" width="8" height="11.300" rx="1" fill="#333" stroke="#fff" strokeWidth="1.300" /><path d="M3 5.500h4v6H3z" fill="#fff" /></svg>
        <svg className="ml-[12px] h-[14px] w-[14px] shrink-0" viewBox="0 0 14 14"><path d="M0 4.500h2.500L6 1v12L2.500 9.500H0z" fill="#fff" /><path d="M8 4q2 3 0 6M10 2.500q3 4.500 0 9" fill="none" stroke="#fff" strokeWidth="1.100" /></svg>
        <div className="ml-[12px] flex h-full w-[62px] shrink-0 flex-col items-center justify-center text-[12px] leading-[17px]">
          <span className="tracking-[-0.4px]">10:19 AM</span>
          <span className="tracking-[-0.6px]">11/22/2019</span>
        </div>
        <div className="ml-[7px] h-[38px] w-[13px] shrink-0 border border-[#8b878c] bg-[linear-gradient(135deg,#5b575c,#262427_50%,#3b383c)]" />
      </div>
    </div>
  );
}

export default function App() {
  return (
    <div className="h-[748px] w-[1300px] overflow-hidden bg-white font-['Open_Sans',sans-serif]">
      <TabStrip />
      <Toolbar />
      <Bookmarks />
      <DocsHeader />
      <div className="flex h-[519px] w-[1280px]">
        <Sheet />
        <SidePanel />
      </div>
      <Taskbar />
    </div>
  );
}
